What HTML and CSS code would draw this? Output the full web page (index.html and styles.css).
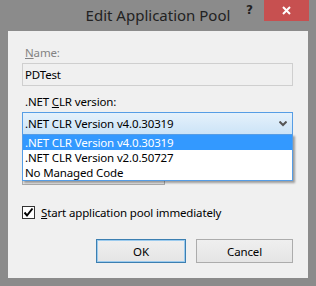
FILE: index.html
```html
<!DOCTYPE html>
<html lang="en">
<head>
  <meta charset="UTF-8" />
  <title>Edit Application Pool</title>
  <link rel="stylesheet" href="styles.css">
</head>
<body>

<div class="window">
  <div class="titlebar">
    <span></span>
    <span class="title">Edit Application Pool</span>
    <div class="caption-buttons">
      <span class="help">?</span>
      <span class="close">
        <svg width="9" height="9" viewBox="0 0 9 9">
          <path d="M1 1 L8 8 M8 1 L1 8" stroke="#fff" stroke-width="2" />
        </svg>
      </span>
    </div>
  </div>

  <div class="client">
    <label class="field-label disabled"><u>N</u>ame:</label>
    <div class="textbox">PDTest</div>

    <label class="field-label second">.NET <u>C</u>LR version:</label>
    <div class="combo-wrap">
      <div class="combo open">
        <span>.NET CLR Version v4.0.30319</span>
        <svg class="chevron" width="8" height="6" viewBox="0 0 8 6">
          <path d="M0.5 0.5 L4 4 L7.5 0.5" fill="none" stroke="#555" stroke-width="2" />
        </svg>
      </div>

      <div class="hidden-combo"></div>

      <ul class="dropdown">
        <li class="selected">.NET CLR Version v4.0.30319</li>
        <li>.NET CLR Version v2.0.50727</li>
        <li>No Managed Code</li>
      </ul>
    </div>

    <label class="check-row">
      <span class="checkbox">
        <svg width="11" height="11" viewBox="0 0 11 11">
          <path d="M1.5 5.5 L4 8.5 L9.5 1.5" fill="none" stroke="#000" stroke-width="2" />
        </svg>
      </span>
      <span><u>S</u>tart application pool immediately</span>
    </label>

    <div class="buttons">
      <button class="btn default">OK</button>
      <button class="btn cancel">Cancel</button>
    </div>
  </div>
</div>

</body>
</html>
```

FILE: styles.css
```css
body {
  margin: 0;
  font-family: "Noto Sans", Arial, sans-serif;
  font-size: 11.5px;
  letter-spacing: -0.15px;
  background-color: #8b8b8b;
}
.window {
  width: 316px;
  height: 286px;
  box-sizing: border-box;
  background-color: #8b8b8b;
  padding: 0 8px 8px 8px;
  display: flex;
  flex-direction: column;
}

.titlebar {
  height: 31px;
  margin: 0 -8px;
  display: grid;
  grid-template-columns: 1fr auto 1fr;
  align-items: start;
  letter-spacing: 0;
}
.title {
  font-size: 15px;
  color: #222;
  line-height: 20px;
  margin-top: 5px;
}
.caption-buttons {
  justify-self: end;
  display: flex;
  align-items: start;
  margin-right: 7px;
}
.help {
  font-family: "DejaVu Sans", sans-serif;
  font-weight: bold;
  font-size: 12px;
  color: #222;
  margin-top: 3px;
  margin-right: 11px;
}
.close {
  width: 45px;
  height: 21px;
  background-color: #c75050;
  display: flex;
  align-items: center;
  justify-content: center;
}

.client {
  flex: 1;
  background-color: #f0f0f0;
  padding: 14px 15px 15px 14px;
  display: flex;
  flex-direction: column;
  color: #000;
}
.field-label {
  line-height: 15px;
  padding-left: 3px;
}
.field-label.disabled {
  color: #838383;
}
.field-label.second {
  margin-top: 8px;
}
.textbox {
  margin-top: 3px;
  height: 21px;
  border: 1px solid #cfcfcf;
  padding-left: 2px;
  line-height: 21px;
}

.combo-wrap {
  position: relative;
  margin-top: 3px;
}
.combo {
  height: 21px;
  border: 1px solid #569de5;
  background: linear-gradient(#e5f1fb, #cce4f7);
  padding: 0 4px 0 2px;
  display: flex;
  align-items: center;
  justify-content: space-between;
}
.chevron {
  margin-right: 1px;
}
.hidden-combo {
  width: 141px;
  height: 21px;
  margin-top: 27px;
  border: 1px solid #acacac;
  background: #e9e9e9;
}
.dropdown {
  position: absolute;
  top: 22px;
  left: 0;
  right: 0;
  margin: 0;
  padding: 0;
  list-style: none;
  background: #fff;
  border: 1px solid #569de5;
  box-shadow: 2px 2px 2px rgba(0, 0, 0, 0.35);
}
.dropdown li {
  height: 15px;
  line-height: 15px;
  padding-left: 2px;
}
.dropdown li.selected {
  background-color: #3399ff;
  color: #fff;
}

.check-row {
  margin-top: 20px;
  display: flex;
  align-items: center;
  gap: 6px;
  line-height: 15px;
}
.checkbox {
  width: 11px;
  height: 11px;
  border: 1px solid #333;
  background: #fff;
  display: flex;
}

.buttons {
  margin-top: auto;
  display: flex;
  justify-content: flex-end;
  gap: 10px;
}
.btn {
  height: 24px;
  font-family: "Noto Sans", Arial, sans-serif;
  font-size: 11.5px;
  letter-spacing: -0.15px;
  color: #000;
  background: linear-gradient(#efefef, #e5e5e5);
  border: 1px solid #acacac;
  padding: 0;
}
.btn.default {
  width: 90px;
  border-color: #3c7fb1;
  box-shadow: inset 0 0 0 1px #9ccbee;
}
.btn.cancel {
  width: 97px;
}
```
